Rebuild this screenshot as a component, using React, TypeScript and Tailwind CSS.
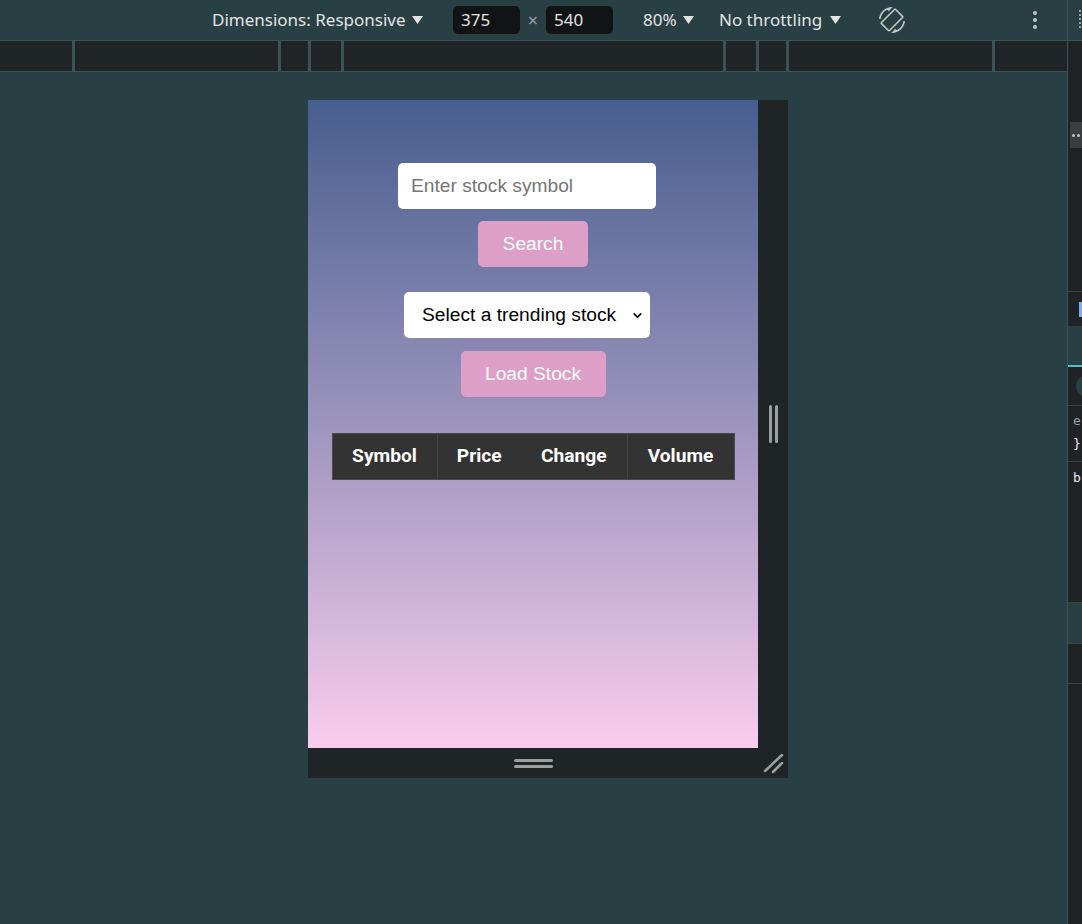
import { ChevronDown } from "lucide-react";

const RULER = [72, 203, 27, 30, 379, 30, 27, 203, 72];
const HEADERS = [
  { label: "Symbol", w: "w-[105px]", line: false },
  { label: "Price", w: "w-[84px]", line: true },
  { label: "Change", w: "w-[106px]", line: false },
  { label: "Volume", w: "w-[107px]", line: true },
];

function Caret() {
  return (
    <svg width="11" height="8" viewBox="0 0 11 8" className="shrink-0">
      <path d="M0 0h11L5.5 8z" fill="#e3e3e3" />
    </svg>
  );
}

// screen rotation, mirrored so the phone leans "/"
function RotateIcon() {
  return (
    <svg width="26" height="26" viewBox="0 0 24 24" className="-scale-x-100">
      <path
        fill="#c4c7c5"
        d="M16.48 2.52c3.27 1.55 5.61 4.72 5.97 8.48h1.5C23.44 4.84 18.29 0 12 0l-.66.03 3.81 3.81 1.33-1.32zm-6.25-.77c-.59-.59-1.54-.59-2.12 0L1.75 8.11c-.59.59-.59 1.54 0 2.12l12.02 12.02c.59.59 1.54.59 2.12 0l6.36-6.36c.59-.59.59-1.54 0-2.12L10.23 1.75zm4.6 19.44L2.81 9.17l6.36-6.36 12.02 12.02-6.36 6.360zm-7.31.29C4.25 19.94 1.91 16.76 1.55 13H.05C.56 19.16 5.71 24 12 24l.66-.03-3.81-3.81-1.33 1.32z"
      />
    </svg>
  );
}

function Toolbar() {
  return (
    <div className="flex h-[41px] shrink-0 items-center border-b border-[#3b5358] pl-[212px] font-['Noto_Sans',sans-serif] text-[17px] text-[#e3e3e3]">
      <div className="flex w-[241px] items-center gap-[6px]">
        <span>Dimensions: Responsive</span>
        <Caret />
      </div>
      <div className="flex h-[28px] w-[67px] items-center rounded-[5px] bg-[#111314] pl-[8px]">375</div>
      <div className="flex w-[26px] justify-center text-[18px] text-[#9aa0a6]">×</div>
      <div className="flex h-[28px] w-[67px] items-center rounded-[5px] bg-[#111314] pl-[8px]">540</div>
      <div className="w-[30px]" />
      <div className="flex w-[76px] items-center gap-[6px]">
        <span>80%</span>
        <Caret />
      </div>
      <div className="flex w-[160px] items-center gap-[8px]">
        <span>No throttling</span>
        <Caret />
      </div>
      <RotateIcon />
      <div className="flex-1" />
      <div className="mr-[30px] flex flex-col gap-[3px]">
        <span className="h-[4px] w-[4px] rounded-full bg-[#c4c7c5]" />
        <span className="h-[4px] w-[4px] rounded-full bg-[#c4c7c5]" />
        <span className="h-[4px] w-[4px] rounded-full bg-[#c4c7c5]" />
      </div>
    </div>
  );
}

function Ruler() {
  return (
    <div className="flex h-[31px] shrink-0 border-b border-[#3b5358] bg-[#1f2427]">
      {RULER.map((w, i) => (
        <div key={i} className="flex">
          {i > 0 && <div className="h-full w-[3px] bg-[#3b5358]" />}
          <div style={{ width: w }} />
        </div>
      ))}
    </div>
  );
}

function StockPage() {
  return (
    <div className="flex h-[648px] w-[450px] flex-col items-center bg-gradient-to-b from-[#465e8e] to-[#f9cdee] font-['Liberation_Sans',Arial,sans-serif]">
      <input
        placeholder="Enter stock symbol"
        className="mt-[63px] mr-[12px] h-[46px] w-[258px] rounded-[5px] bg-white px-[13px] text-[19.2px] text-black outline-none placeholder:text-[#757575]"
      />
      <button className="mt-[12px] h-[46px] w-[110px] rounded-[5px] bg-[#dd9fc8] text-[19.2px] text-white">Search</button>
      <div className="relative mt-[25px] mr-[12px]">
        <select className="h-[46px] w-[246px] appearance-none rounded-[5px] bg-white pl-[18px] text-[19.2px] text-black outline-none">
          <option>Select a trending stock</option>
        </select>
        <ChevronDown className="pointer-events-none absolute top-[17px] right-[6px] h-[13px] w-[13px] text-black" strokeWidth={3} />
      </div>
      <button className="mt-[13px] h-[46px] w-[145px] rounded-[5px] bg-[#dd9fc8] text-[19.2px] text-white">Load Stock</button>
      <table className="mt-[36px] border border-[#4a4a4a] bg-[#333333] font-['Roboto',sans-serif] text-[19.2px] font-bold text-white">
        <thead>
          <tr className="h-[46px]">
            {HEADERS.map((h) => (
              <th key={h.label} className={`${h.w} ${h.line ? "border-l border-[#444]" : ""} text-center`}>
                {h.label}
              </th>
            ))}
          </tr>
        </thead>
      </table>
    </div>
  );
}

function Device() {
  return (
    <div className="mt-[28px] ml-[308px] flex w-[480px] flex-col">
      <div className="flex">
        <StockPage />
        <div className="flex w-[30px] items-center justify-center gap-[3px] bg-[#1f2527]">
          <span className="h-[38px] w-[3px] rounded-full bg-[#9e9e9e]" />
          <span className="h-[38px] w-[3px] rounded-full bg-[#9e9e9e]" />
        </div>
      </div>
      <div className="flex h-[30px] bg-[#1f2527]">
        <div className="flex w-[450px] flex-col items-center justify-center gap-[3px]">
          <span className="h-[3px] w-[39px] rounded-full bg-[#9e9e9e]" />
          <span className="h-[3px] w-[39px] rounded-full bg-[#9e9e9e]" />
        </div>
        <svg width="30" height="30" viewBox="0 0 30 30" stroke="#9e9e9e" strokeWidth="2.5" strokeLinecap="round">
          <path d="M7 23L24 7" />
          <path d="M15 24L24 15" />
        </svg>
      </div>
    </div>
  );
}

function SidePanel() {
  return (
    <div className="flex w-[15px] shrink-0 flex-col overflow-hidden border-l border-[#3b5358] bg-[#1f2326] font-['DejaVu_Sans_Mono',monospace] text-[14px] leading-none">
      <div className="flex h-[41px] shrink-0 justify-end border-b border-[#3b5358] bg-[#283f44] pt-[10px] pr-[1px]">
        <div className="flex flex-col gap-[2px]">
          <span className="h-[2px] w-[2px] bg-[#9aa0a6]" />
          <span className="h-[2px] w-[2px] bg-[#9aa0a6]" />
          <span className="h-[2px] w-[2px] bg-[#9aa0a6]" />
          <span className="h-[2px] w-[2px] bg-[#9aa0a6]" />
          <span className="h-[2px] w-[2px] bg-[#9aa0a6]" />
        </div>
      </div>
      <div className="h-[81px] shrink-0" />
      <div className="ml-[2px] flex h-[26px] shrink-0 items-center gap-[2px] bg-[#3a3d40] pl-[2px]">
        <span className="h-[3px] w-[3px] rounded-full bg-[#c4c7c5]" />
        <span className="h-[3px] w-[3px] rounded-full bg-[#c4c7c5]" />
      </div>
      <div className="h-[144px] shrink-0 border-b border-[#3c4043]" />
      <div className="flex h-[34px] shrink-0 justify-end pt-[10px]">
        <span className="h-[15px] w-[3px] bg-[#7cacf8]" />
      </div>
      <div className="h-[41px] shrink-0 border-b-2 border-[#4fc1cd] bg-[#283f44]" />
      <div className="flex h-[39px] shrink-0 items-center border-b border-[#3c4043] pl-[8px]">
        <span className="h-[22px] w-[22px] shrink-0 rounded-full bg-[#283f44]" />
      </div>
      <div className="h-[56px] shrink-0 border-b border-[#3c4043] pt-[8px] pl-[5px] text-[13px]">
        <div className="text-[#9aa0a6]">e</div>
        <div className="mt-[10px] text-[#e8eaed]">{"}"}</div>
      </div>
      <div className="h-[141px] shrink-0 border-b border-[#3c4043] pt-[9px] pl-[5px] text-[13px] text-[#e8eaed]">b</div>
      <div className="h-[41px] shrink-0 border-b border-[#3c4043] bg-[#283f44]" />
      <div className="h-[40px] shrink-0 border-b border-[#3c4043]" />
    </div>
  );
}

export default function App() {
  return (
    <div className="flex h-[924px] w-[1082px] overflow-hidden bg-[#283f44]">
      <main className="flex w-[1067px] flex-col">
        <Toolbar />
        <Ruler />
        <Device />
      </main>
      <SidePanel />
    </div>
  );
}
